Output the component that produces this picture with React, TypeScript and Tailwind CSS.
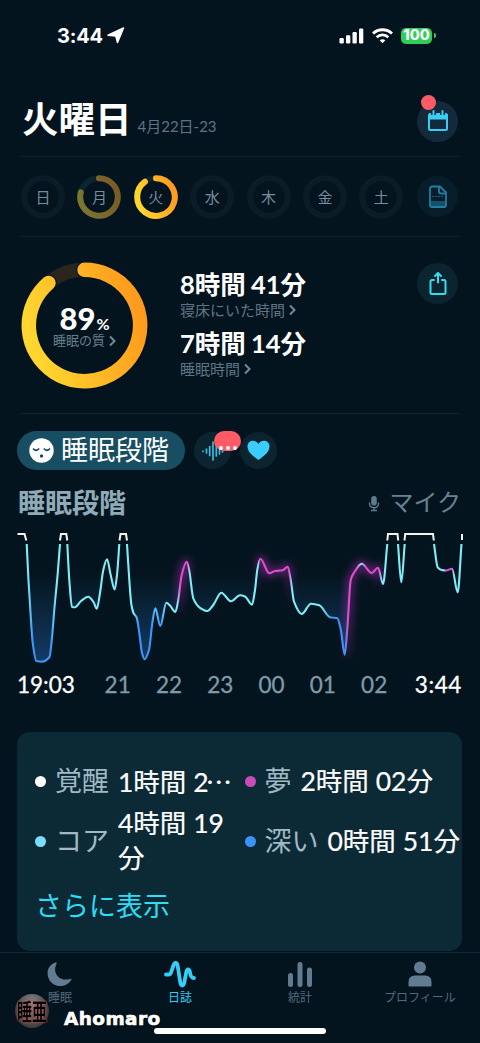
import type { ReactNode } from 'react';
import clsx from 'clsx';

type Point = [number, number];

const jp = "font-['Lato','Noto_Sans_CJK_JP',sans-serif]";
const cjk = "font-['Noto_Sans_CJK_JP',sans-serif]";

// chart coordinates: x is the page x, y starts at the top of the chart
const segments: Point[][] = [
  [[26.7, 19], [28.5, 55], [31, 95], [33, 120], [36.3, 136], [42, 136.7], [49.5, 132], [52, 112], [54.5, 82], [57.5, 51], [60, 19]],
  [[67.3, 19], [69.3, 55], [72, 82], [75, 82.3], [81, 76], [88.3, 71.7], [93.5, 77], [96.8, 83.8], [100, 68], [103.3, 45], [107, 34.3], [110.7, 50], [114.7, 64.5], [117.2, 48], [119.3, 19]],
  [[127, 19], [129.3, 55], [131.3, 79], [133.5, 88], [136.7, 92.5], [139.3, 108], [142, 128], [144.5, 134.3], [149, 125], [152.3, 98], [155.3, 83.3], [160.3, 101], [166.3, 77.7], [170, 80.5], [175.3, 87], [178.3, 75], [181.7, 50], [186.7, 36.7], [189.3, 46], [193.3, 73.3], [200, 82.8], [207.3, 86], [213.3, 80], [221.3, 67.7], [231, 76.3], [240, 70.3], [245, 71.5], [252, 79.7], [255, 65], [257.3, 45], [260.3, 33.7], [269.3, 48.3], [275, 46], [282.7, 45.3], [287.7, 41.7], [290.7, 55], [294, 76.7], [301.7, 89], [311, 78.7], [319.3, 80.3], [330, 92.3], [337.3, 93.3], [340.7, 104], [344.7, 129.7], [347.5, 101], [350.7, 55], [354, 47.7], [361.7, 38.7], [371.7, 48], [378, 42.7], [383, 59], [387.3, 19]],
  [[398, 19], [401.3, 57.3], [404.7, 19]],
  [[434, 19], [437.7, 42.3], [441.7, 45], [446, 45.5], [452, 43.7], [457.7, 67.3], [461.5, 19]],
];

const C = '#7deef8';
const B = '#3d95f7';
const M = '#e04cc9';

const stops: [number, string][] = [
  [28, C], [32.5, B], [51, B], [56, C], [134, C], [138, B], [152, B], [156, '#5cc4fa'], [160, B], [168, C],
  [177.5, C], [180, M], [187, M], [190, C], [258, C], [260, M], [289, M], [292, C], [320, C], [332, B],
  [345, B], [348.5, M], [356, M], [361, C], [366, M], [379, M], [382, C], [444, C], [446, M], [451, M], [454, C],
];

const glow: [number, number][] = [
  [176, 0], [180, 1], [187, 1], [191, 0], [256, 0], [260, 1], [289, 1], [293, 0],
  [344, 0], [348, 1], [379, 1], [383, 0],
];

const hours = ['21', '22', '23', '00', '01', '02'];

// monotone cubic, so that the peaks keep their height
function curve(pts: Point[]) {
  const slope = pts.slice(1).map((p, i) => (p[1] - pts[i][1]) / (p[0] - pts[i][0]));
  const tangent = pts.map((_, i) => {
    const a = slope[i - 1];
    const b = slope[i];
    if (a === undefined) return b;
    if (b === undefined) return a;
    return a * b <= 0 ? 0 : (2 * a * b) / (a + b);
  });
  return pts
    .map((p, i) => {
      if (i === 0) return `M${p[0]} ${p[1]}`;
      const q = pts[i - 1];
      const d = (p[0] - q[0]) / 3;
      return `C${q[0] + d} ${q[1] + d * tangent[i - 1]} ${p[0] - d} ${p[1] - d * tangent[i]} ${p[0]} ${p[1]}`;
    })
    .join('');
}

function SleepChart() {
  const line = segments.map(curve).join('');
  return (
    <svg className="block" width="480" height="145" viewBox="0 0 480 145" fill="none">
      <defs>
        <linearGradient id="stage" gradientUnits="userSpaceOnUse" x1="0" y1="0" x2="480" y2="0">
          {stops.map(([x, color]) => (
            <stop key={x} offset={x / 480} stopColor={color} />
          ))}
        </linearGradient>
        <linearGradient id="glow" gradientUnits="userSpaceOnUse" x1="0" y1="0" x2="480" y2="0">
          {glow.map(([x, o]) => (
            <stop key={x} offset={x / 480} stopColor="#b82fc0" stopOpacity={o} />
          ))}
        </linearGradient>
        <linearGradient id="depth" gradientUnits="userSpaceOnUse" x1="0" y1="48" x2="0" y2="138">
          <stop offset="0" stopColor="#1d5795" stopOpacity="0" />
          <stop offset="1" stopColor="#1d5795" stopOpacity="0.6" />
        </linearGradient>
        <filter id="blur" filterUnits="userSpaceOnUse" x="0" y="0" width="480" height="145">
          <feGaussianBlur stdDeviation="4" />
        </filter>
      </defs>
      <path d={line} fill="url(#depth)" />
      <path d={line} stroke="url(#glow)" strokeWidth="6" opacity="0.6" filter="url(#blur)" />
      <path d={line} stroke="url(#stage)" strokeWidth="2.1" strokeLinejoin="round" />
      <path
        d="M17.5 9H24.5L26.3 15.5M60 15.5L61 9H66.3L67.3 15.5M119.5 15.5L120.5 9H126L127 15.5M387.3 15.5L388 9H397.5L398.2 15.5M404.5 15.5L405.2 9H433L433.8 15.5M462 9V15"
        stroke="#f5f3ed"
        strokeWidth="2"
      />
    </svg>
  );
}

interface DayProps {
  label: string;
  progress?: number;
  active?: boolean;
}

function Day({ label, progress, active }: DayProps) {
  const r = 18.8;
  const arc = (from: number, to: number) => {
    const at = (t: number) => {
      const a = t * Math.PI * 2 - Math.PI / 2;
      return `${22 + r * Math.cos(a)} ${22 + r * Math.sin(a)}`;
    };
    return `M${at(from)}A${r} ${r} 0 ${to - from > 0.5 ? 1 : 0} 1 ${at(to)}`;
  };
  return (
    <div className="relative flex size-11 items-center justify-center">
      <svg className="absolute inset-0" width="44" height="44" viewBox="0 0 44 44" fill="none">
        <circle cx="22" cy="22" r={r} stroke={progress ? '#0a2430' : '#0b1c27'} strokeWidth="6" />
        {progress && (
          <g opacity={active ? 1 : 0.46} strokeWidth="6" strokeLinecap="round">
            <path d={arc(0, progress)} stroke="url(#ring)" />
          </g>
        )}
      </svg>
      <span className={clsx(cjk, 'relative -mt-px text-[15px] leading-none text-[#778d9b]')}>{label}</span>
    </div>
  );
}

function QualityRing() {
  return (
    <div className="relative ml-[21px] mt-[25px] size-[127px]">
      <svg className="absolute inset-0" width="127" height="127" viewBox="0 0 127 127" fill="none">
        <defs>
          <linearGradient id="ring" x1="1" y1="0.2" x2="0" y2="0.5">
            <stop offset="0" stopColor="#ff981c" />
            <stop offset="1" stopColor="#ffd52f" />
          </linearGradient>
        </defs>
        <circle cx="63.5" cy="63.5" r="55.7" stroke="#2a251d" strokeWidth="14" />
        <path d="M63.5 7.8A55.7 55.7 0 1 1 27.5 21" stroke="#04141e" strokeWidth="17" strokeLinecap="round" />
        <path d="M63.5 7.8A55.7 55.7 0 1 1 27.5 21" stroke="url(#ring)" strokeWidth="14.5" strokeLinecap="round" />
      </svg>
      <div className={clsx(jp, 'relative flex flex-col items-center pt-[45px]')}>
        <div className="flex h-[23px] items-baseline leading-[23px] text-white">
          <span className="text-[31px] font-black">89</span>
          <span className="ml-px text-[16px] font-bold">%</span>
        </div>
        <div className="mt-[4px] flex items-center gap-1 text-[13px] leading-[13px] text-[#68808f]">
          睡眠の質
          <Chevron />
        </div>
      </div>
    </div>
  );
}

function Chevron() {
  return (
    <svg width="7" height="12" viewBox="0 0 7 12" fill="none" stroke="#718a99" strokeWidth="2">
      <path d="M1 1.5L5.5 6L1 10.5" />
    </svg>
  );
}

function Duration({ value, label }: { value: string; label: string }) {
  return (
    <div>
      <p className="text-[25.5px] font-bold leading-[31px] text-white [word-spacing:-1px]">{value}</p>
      <div className="flex items-center gap-1 text-[15px] leading-5 text-[#5c7484]">
        {label}
        <Chevron />
      </div>
    </div>
  );
}

function RoundButton({ className, children }: { className?: string; children: ReactNode }) {
  return (
    <button className={clsx('relative flex size-[41px] shrink-0 items-center justify-center rounded-full', className)}>
      {children}
    </button>
  );
}

function StatusBar() {
  return (
    <div className="flex h-[71px] shrink-0 items-center pl-[57px] pr-11 text-white">
      <span className="font-['Inter',sans-serif] text-[20px] font-bold leading-none tracking-[-0.2px]">3:44</span>
      <svg className="ml-1" width="18" height="17" viewBox="0 0 18 17">
        <path d="M16.5 1L10.5 15.5L8.8 9L1 8.2Z" fill="white" stroke="white" strokeWidth="1.5" strokeLinejoin="round" />
      </svg>
      <svg className="ml-auto" width="25" height="16" viewBox="0 0 25 16" fill="white">
        <rect x="0.5" y="10" width="4.3" height="5.5" rx="1.2" />
        <rect x="7" y="7.3" width="4.3" height="8.2" rx="1.2" />
        <rect x="13.5" y="4" width="4.3" height="11.5" rx="1.2" />
        <rect x="20" y="0.5" width="4.3" height="15" rx="1.2" />
      </svg>
      <svg className="ml-2" width="21" height="16" viewBox="0 0 21 16" fill="none" stroke="white" strokeWidth="2.8">
        <path d="M1 5.5C6.4 0.5 14.6 0.5 20 5.5" />
        <path d="M4.7 9.2C8 6.2 13 6.2 16.3 9.2" />
        <path d="M10.5 15.2L7.7 12.2C9.3 10.8 11.7 10.8 13.3 12.2Z" fill="white" stroke="none" />
      </svg>
      <div className="ml-2 flex h-4 w-[31px] items-center justify-center rounded-[5px] bg-[#2fcd59] font-['Inter',sans-serif] text-[14.5px] font-extrabold leading-none">
        100
      </div>
      <div className="ml-0.5 h-[5px] w-[2px] rounded-r-full bg-[#2fcd59]" />
    </div>
  );
}

function Stage({ color, name, children }: { color: string; name: string; children: ReactNode }) {
  return (
    <div className="flex h-[60px] items-center whitespace-nowrap">
      <span className={clsx('mr-[9px] size-[11px] shrink-0 rounded-full', color)} />
      <span className="text-[27px] text-[#a0b9c5]">{name}</span>
      <span className="ml-[9px] text-[26.5px] leading-[35px] text-white [-webkit-text-stroke:0.2px_white]">
        {children}
      </span>
    </div>
  );
}

function NavItem({ label, active, children }: { label: string; active?: boolean; children: ReactNode }) {
  return (
    <a className={clsx('flex flex-1 flex-col items-center pt-[7px]', active ? 'text-[#35cdf5]' : 'text-[#617c91]')}>
      <svg width="34" height="28" viewBox="0 0 34 28" fill="currentColor">
        {children}
      </svg>
      <span className={clsx(cjk, 'mt-px text-[12px] leading-[16px]', !active && 'text-[#526a7d]')}>{label}</span>
    </a>
  );
}

export default function App() {
  return (
    <div className={clsx(jp, 'relative flex h-[1043px] w-[480px] flex-col overflow-hidden bg-[#04141e]')}>
      <StatusBar />

      <header className="mx-[21px] flex h-[86px] shrink-0 items-center border-b border-[#10222d] pt-1">
        <h1 className="ml-px mt-[7px] text-[36.5px] font-bold leading-none text-white">火曜日</h1>
        <span className="ml-[6px] mt-[22px] text-[15px] leading-none text-[#5c7484]">4月22日-23</span>
        <RoundButton className="ml-auto mr-px mt-[11px] bg-[#142a3b]">
          <svg width="22" height="22" viewBox="0 0 22 22" fill="none" stroke="#39cdf5">
            <rect x="2" y="4" width="18" height="16" rx="1.5" strokeWidth="2" />
            <path d="M2 4H20V9H2Z" fill="#39cdf5" />
            <path d="M6.5 0V5M15.5 0V5" stroke="#142a3b" strokeWidth="5" />
            <path d="M6.5 1V5M15.5 1V5" strokeWidth="2" strokeLinecap="round" />
          </svg>
          <span className="absolute -top-[6px] left-1 size-[15px] rounded-full bg-[#ff5b66]" />
        </RoundButton>
      </header>

      <section className="mx-[21px] flex h-20 shrink-0 items-center border-b border-[#10222d]">
        <div className="flex gap-[12.4px]">
          <Day label="日" />
          <Day label="月" progress={0.79} />
          <Day label="火" progress={0.9} active />
          <Day label="水" />
          <Day label="木" />
          <Day label="金" />
          <Day label="土" />
        </div>
        <RoundButton className="ml-auto mr-px bg-[#081d2a]">
          <svg width="20" height="24" viewBox="0 0 20 24" fill="none" stroke="#217e9d" strokeWidth="1.8">
            <path d="M2 16H18V20Q18 22 16 22H4Q2 22 2 20Z" fill="#14506a" stroke="none" />
            <path d="M4.5 1.5H12L18 7.5V20Q18 22 16 22H4Q2 22 2 20V4Q2 1.5 4.5 1.5Z" strokeLinejoin="round" />
            <path d="M11 2V6.5Q11 8.5 13 8.5H18" />
            <path d="M4 11.5H16" strokeWidth="0.7" strokeDasharray="2 1" />
          </svg>
        </RoundButton>
      </section>

      <section className="flex h-[176px] shrink-0">
        <QualityRing />
        <div className="ml-8 mt-[32px] flex flex-col gap-2">
          <Duration value="8時間 41分" label="寝床にいた時間" />
          <Duration value="7時間 14分" label="睡眠時間" />
        </div>
        <RoundButton className="ml-auto mr-[22px] mt-[26px] bg-[#0b2430]">
          <svg width="20" height="26" viewBox="0 0 20 26" fill="none" stroke="#34dcee" strokeWidth="2" strokeLinecap="round" strokeLinejoin="round">
            <path d="M6 9H4Q2.5 9 2.5 10.5V21.5Q2.5 23 4 23H16Q17.5 23 17.5 21.5V10.5Q17.5 9 16 9H14" />
            <path d="M10 11.5V2.5M7 5L10 2L13 5" />
          </svg>
        </RoundButton>
      </section>
      <div className="mx-[21px] h-px shrink-0 bg-[#10222d]" />

      <div className="mt-[17px] flex h-[39px] shrink-0 items-center pl-[17px]">
        <button className="flex h-[39px] w-[168px] items-center rounded-full bg-[#184e62] pl-[12px]">
          <svg width="25" height="25" viewBox="0 0 25 25" fill="none" stroke="#184e62" strokeWidth="1.7" strokeLinecap="round">
            <circle cx="12.5" cy="12.5" r="12.2" fill="white" stroke="none" />
            <path d="M4.5 11Q7 13.5 9.7 11M15.3 11Q18 13.5 20.5 11" />
            <circle cx="12.5" cy="18" r="1.7" fill="#184e62" stroke="none" />
          </svg>
          <span className="-mt-0.5 ml-[7px] whitespace-nowrap text-[27px] leading-none text-white">睡眠段階</span>
        </button>
        <div className="relative ml-[9px] flex size-[37px] items-center justify-center rounded-full bg-[#0b2430]">
          <svg width="24" height="24" viewBox="0 0 24 24" stroke="#35bde0" strokeWidth="1.7" strokeLinecap="round">
            <path d="M2 12V12.5M5.5 10V14M8.7 7.5V16.5M12 3V21M15.3 7V17M18.5 9V15M21.5 11V13" />
          </svg>
          <div className="absolute -top-px left-[20px] flex h-5 w-[27px] items-end justify-center gap-[3px] rounded-full bg-[#ff5b66] pb-px">
            <i className="size-1 rounded-full bg-white" />
            <i className="size-1 rounded-full bg-white" />
            <i className="size-1 rounded-full bg-white" />
          </div>
        </div>
        <div className="ml-[9px] flex size-[37px] items-center justify-center rounded-full bg-[#0b2430]">
          <svg width="23" height="21" viewBox="0 0 23 21" fill="#3bcdff">
            <path d="M11.5 20C8.5 17.5 0.5 13 0.5 6.5C0.5 0.3 8.5 -1.2 11.5 4C14.5 -1.2 22.5 0.3 22.5 6.5C22.5 13 14.5 17.5 11.5 20Z" />
          </svg>
        </div>
      </div>

      <div className="mt-[13px] flex h-[38px] shrink-0 items-center pl-[18px] pr-[19px]">
        <h2 className="text-[27px] font-bold leading-none text-[#8fabb8]">睡眠段階</h2>
        <svg className="ml-auto mt-1" width="12" height="18" viewBox="0 0 12 18" fill="none" stroke="#5d7b8a" strokeWidth="1.4">
          <rect x="3.2" y="1" width="5.6" height="9.5" rx="2.8" fill="#5d7b8a" stroke="none" />
          <path d="M1.5 7.5V8.5C1.5 14 10.5 14 10.5 8.5V7.5M6 12.5V15M3 15.5H9" />
        </svg>
        <span className="ml-[9px] text-[24px] leading-none text-[#668391]">マイク</span>
      </div>

      <div className="mt-[4px] shrink-0">
        <SleepChart />
      </div>

      <div className="flex h-[30px] shrink-0 items-center pl-[17px] pr-[18px] text-[22.5px] leading-none text-[#7f9ba8] [-webkit-text-stroke:0.3px]">
        <span className="w-[75px] text-white">19:03</span>
        {hours.map((hour) => (
          <span key={hour} className="w-[51.3px] text-center">
            {hour}
          </span>
        ))}
        <span className="ml-auto tracking-[0.6px] text-white">3:44</span>
      </div>

      <section className="ml-[17px] mt-[32px] h-[219px] w-[445px] shrink-0 rounded-[13px] bg-[#0c2936] pl-[18px] pt-[19px]">
        <div className="grid grid-cols-[209.5px_217.5px]">
          <Stage color="bg-white" name="覚醒">
            1時間 2<span className={clsx(cjk, '-ml-[3px]')}>…</span>
          </Stage>
          <Stage color="bg-[#c94abb]" name="夢">
            2時間 02分
          </Stage>
          <Stage color="bg-[#7ddcfa]" name="コア">
            4時間 19
            <br />分
          </Stage>
          <Stage color="bg-[#3d91fa]" name="深い">
            0時間 51分
          </Stage>
        </div>
        <a className="mt-[18px] block text-[27px] leading-[34px] text-[#2fdcf5]">さらに表示</a>
      </section>

      <nav className="mt-px flex h-[91px] shrink-0 border-t border-[#112733]">
        <NavItem label="睡眠">
          <path d="M12.5 2.5C2.5 5.5 2.5 18 9.5 23.5C16.5 28.5 26 26 28.8 18.5C25 20 18 20.5 14.5 16C11.5 12.5 11.5 8 13.5 3.8C14 2.8 13.5 2.2 12.5 2.5Z" />
        </NavItem>
        <NavItem label="日誌" active>
          <path
            d="M3 14.5H5.5Q7.5 14.5 8.2 12L10.3 6C11.5 2 14 2 14.7 6L17.3 22.5C18 26.5 20.5 26.5 21.3 22.5L23.2 12.5C24 8.5 26.3 8.5 27 12.5Q27.8 18 31 18"
            fill="none"
            stroke="currentColor"
            strokeWidth="3.8"
            strokeLinecap="round"
          />
        </NavItem>
        <NavItem label="統計">
          <rect x="5" y="13" width="5" height="14" rx="2.5" />
          <rect x="14.5" y="2" width="5" height="25" rx="2.5" />
          <rect x="24" y="7.5" width="5" height="19.5" rx="2.5" />
        </NavItem>
        <NavItem label="プロフィール">
          <circle cx="17" cy="7.5" r="6" />
          <path d="M5.5 25.5V22Q5.5 15.5 12 15.5H22Q28.5 15.5 28.5 22V25.5Q28.5 26.5 27.5 26.5H6.5Q5.5 26.5 5.5 25.5Z" />
        </NavItem>
      </nav>

      <div className="absolute left-[15px] top-[994px] flex items-center">
        <div className="flex size-[34px] items-center justify-center rounded-full bg-radial-[at_50%_30%] from-[#888] via-[#555] to-[#1a1a1a]">
          <span className="scale-y-150 whitespace-nowrap text-[15px] font-bold leading-none text-black [text-shadow:0_0_1px_#aaa,0_0_2px_#e5222f]">
            睡亜
          </span>
        </div>
        <span className="ml-[15px] mt-[16px] font-['DejaVu_Sans',sans-serif] text-[18.5px] font-bold leading-none tracking-[0.4px] text-white [-webkit-text-stroke:0.6px_white] [text-shadow:1px_1px_2px_#000]">
          Ahomaro
        </span>
      </div>
      <div className="absolute left-[154px] top-[1028px] h-[6px] w-[172px] rounded-full bg-white" />
    </div>
  );
}
